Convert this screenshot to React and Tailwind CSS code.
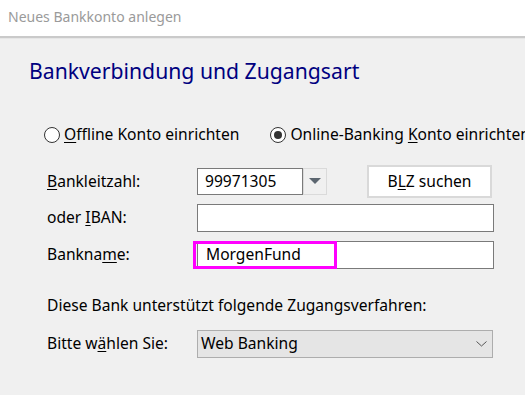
export default function App() {
  return (
    <div
      className="w-[525px] h-[395px] overflow-hidden bg-[#f0f0f0] text-black"
      style={{ fontFamily: '"Noto Sans", "Open Sans", sans-serif' }}
    >
      {/* Title bar */}
      <div className="h-[38px] bg-white border-b-2 border-[#cacaca] flex items-center pl-[8px]">
        <span className="text-[14px] text-[#9a9a9a] -mt-[3px]">Neues Bankkonto anlegen</span>
      </div>

      <div className="border-t border-[#e6e6e6]">
        <h1 className="mt-[17px] pl-[29px] text-[21.2px] leading-[30px] text-[#000080] whitespace-nowrap">
          Bankverbindung und Zugangsart
        </h1>

        {/* Account type */}
        <div className="mt-[41px] pl-[44px] flex items-center h-[16px] text-[15.6px] whitespace-nowrap">
          <label className="flex items-center shrink-0">
            <span className="w-[16px] h-[16px] rounded-full border border-[#333] bg-white" />
            <span className="ml-[4px]">
              <u className="underline-offset-2">O</u>ffline Konto einrichten
            </span>
          </label>
          <label className="flex items-center ml-[31px] shrink-0">
            <span className="w-[16px] h-[16px] rounded-full border border-[#333] bg-white flex items-center justify-center">
              <span className="w-[8px] h-[8px] rounded-full bg-[#333]" />
            </span>
            <span className="ml-[4px]">
              Online-Banking <u className="underline-offset-2">K</u>onto einrichten
            </span>
          </label>
        </div>

        <div className="pl-[47px] text-[15.6px]">
          {/* BLZ */}
          <div className="mt-[22px] flex items-center h-[33px]">
            <span className="w-[150px]">
              <u className="underline-offset-2">B</u>ankleitzahl:
            </span>
            <div className="w-[106px] h-[27px] bg-white border border-[#7a7a7a] flex items-center pl-[7px]">
              99971305
            </div>
            <div className="w-[24px] h-[27px] border border-[#dadada] flex items-center justify-center">
              <svg width="12" height="7" viewBox="0 0 12 7">
                <path d="M0 0 H12 L6 6 Z" fill="#5c6670" />
              </svg>
            </div>
            <button className="ml-[40px] w-[125px] h-[33px] bg-white border-2 border-[#d9d9d9]">
              B<u className="underline-offset-2">L</u>Z suchen
            </button>
          </div>

          {/* IBAN */}
          <div className="mt-[6px] flex items-center h-[28px]">
            <span className="w-[150px]">
              oder <u className="underline-offset-2">I</u>BAN:
            </span>
            <div className="w-[297px] h-[28px] bg-white border border-[#7a7a7a]" />
          </div>

          {/* Bankname */}
          <div className="mt-[9px] flex items-center h-[28px]">
            <span className="w-[150px]">
              Bankna<u className="underline-offset-2">m</u>e:
            </span>
            <div className="relative w-[297px] h-[28px] bg-white border border-[#7a7a7a] flex items-center pl-[8px]">
              MorgenFund
              <div className="absolute left-[-5px] top-[-1px] w-[144px] h-[28px] border-[3px] border-[#ff00ff]" />
            </div>
          </div>

          <p className="mt-[26px] leading-[20px] whitespace-nowrap">Diese Bank unterstützt folgende Zugangsverfahren:</p>

          {/* Select */}
          <div className="mt-[15px] flex items-center h-[28px]">
            <span className="w-[150px]">
              Bitte w<u className="underline-offset-2">ä</u>hlen Sie:
            </span>
            <div className="w-[296px] h-[28px] bg-[#e5e5e5] border border-[#adadad] flex items-center justify-between pl-[3px] pr-[5px]">
              <span>Web Banking</span>
              <svg width="11" height="6" viewBox="0 0 11 6">
                <path d="M0.5 0.5 L5.5 5 L10.5 0.5" fill="none" stroke="#555" strokeWidth="1" />
              </svg>
            </div>
          </div>
        </div>
      </div>
    </div>
  );
}
